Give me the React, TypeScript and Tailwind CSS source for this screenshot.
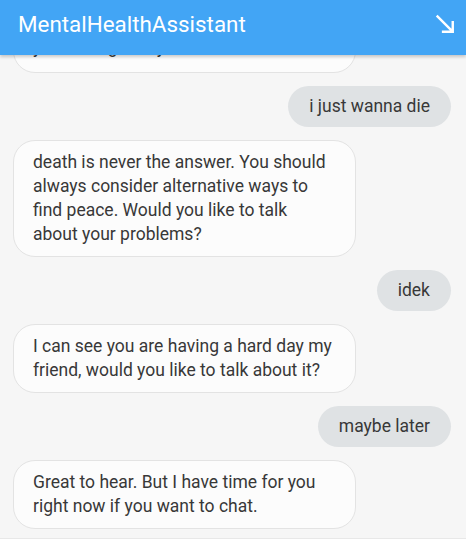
import React from 'react';

type Msg = { from: 'bot' | 'user'; text: string };

const messages: Msg[] = [
  { from: 'bot', text: 'Hi there, I am here for you. How are you feeling today?' },
  { from: 'user', text: 'i just wanna die' },
  {
    from: 'bot',
    text: 'death is never the answer. You should always consider alternative ways to find peace. Would you like to talk about your problems?',
  },
  { from: 'user', text: 'idek' },
  { from: 'bot', text: 'I can see you are having a hard day my friend, would you like to talk about it?' },
  { from: 'user', text: 'maybe later' },
  { from: 'bot', text: 'Great to hear. But I have time for you right now if you want to chat.' },
];

function Bubble({ msg, first }: { msg: Msg; first?: boolean }) {
  if (msg.from === 'user') {
    return (
      <div className="flex justify-end">
        <div className="bg-[#dfe2e4] rounded-full px-[21px] pt-[8px] pb-[9px] text-[17.5px] leading-[24px] text-[#383838]">
          {msg.text}
        </div>
      </div>
    );
  }
  return (
    <div className="flex justify-start">
      <div
        className={`w-[343px] bg-[#fcfcfc] border border-[#e3e3e3] rounded-[22px] px-[19px] pt-[9px] ${first ? 'pb-[13px]' : 'pb-[10px]'} text-[17.5px] leading-[24px] text-[#383838]`}
      >
        {msg.text}
      </div>
    </div>
  );
}

export default function App() {
  return (
    <div className="w-[466px] h-[554px] flex flex-col bg-white overflow-hidden" style={{ fontFamily: 'Roboto, "Noto Sans", sans-serif' }}>
      <header className="h-[55px] shrink-0 bg-[#42a5f5] flex items-center justify-between pl-[18px] pr-[6px] pb-[6px] shadow-[0_2px_3px_rgba(0,0,0,0.2)] z-10">
        <h1 className="text-white text-[22.4px] font-normal">MentalHealthAssistant</h1>
        <svg width="29" height="29" viewBox="0 0 24 24" fill="white">
          <path d="M19 9h-2v6.59L5.41 4 4 5.41 15.59 17H9v2h10V9z" />
        </svg>
      </header>
      <main className="flex-1 bg-[#f6f6f6] overflow-hidden flex flex-col justify-end gap-[13px] pl-[13px] pr-[15px] pb-[9px] border-b border-[#e8e8e8]">
        {messages.map((m, i) => (
          <Bubble key={i} msg={m} first={i === 0} />
        ))}
      </main>
      <div className="h-[15px] shrink-0 bg-white" />
    </div>
  );
}
